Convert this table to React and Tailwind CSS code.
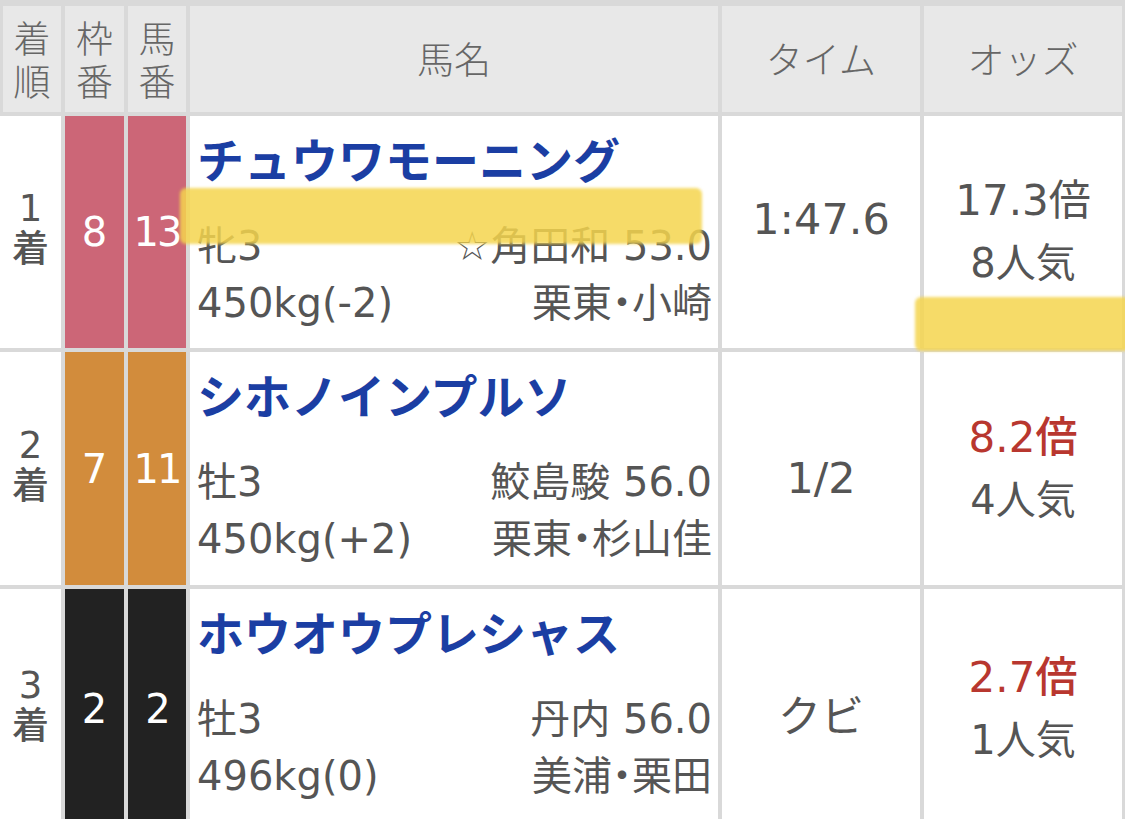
import React from 'react';

const FONT = { fontFamily: '"DejaVu Sans", "Noto Sans CJK JP", sans-serif' };

const rows = [
  {
    pos: '1',
    waku: '8',
    uma: '13',
    frame: 'bg-[#cc6677]',
    name: 'チュウワモーニング',
    sexAge: '牝3',
    jockey: '☆角田和 53.0',
    weight: '450kg(-2)',
    stable: '栗東',
    trainer: '小崎',
    time: '1:47.6',
    timePad: 'pb-[26px]',
    odds: '17.3倍',
    hot: false,
    pop: '8人気',
  },
  {
    pos: '2',
    waku: '7',
    uma: '11',
    frame: 'bg-[#d28c3c]',
    name: 'シホノインプルソ',
    sexAge: '牡3',
    jockey: '鮫島駿 56.0',
    weight: '450kg(+2)',
    stable: '栗東',
    trainer: '杉山佳',
    time: '1/2',
    timePad: 'pt-[20px]',
    odds: '8.2倍',
    hot: true,
    pop: '4人気',
  },
  {
    pos: '3',
    waku: '2',
    uma: '2',
    frame: 'bg-[#222222]',
    name: 'ホウオウプレシャス',
    sexAge: '牡3',
    jockey: '丹内 56.0',
    weight: '496kg(0)',
    stable: '美浦',
    trainer: '栗田',
    time: 'クビ',
    timePad: 'pt-[16px]',
    odds: '2.7倍',
    hot: true,
    pop: '1人気',
  },
];

const Head = ({ children, className = '' }) => (
  <div
    className={`bg-[#e8e8e8] flex items-center justify-center text-center text-[#666] font-light ${className}`}
    style={{ fontFamily: '"Noto Sans CJK JP", sans-serif' }}
  >
    {children}
  </div>
);

function ResultRow({ r }) {
  return (
    <>
      <div className="bg-white flex items-center justify-center pb-[6px]">
        <div className="text-center text-[37px] leading-[41px] font-medium text-[#555]">
          {r.pos}
          <br />着
        </div>
      </div>
      <div className={`${r.frame} flex items-center justify-center text-white text-[40px] font-medium`}>
        {r.waku}
      </div>
      <div className={`${r.frame} flex items-center justify-center text-white text-[40px] font-medium tracking-[-2px]`}>
        {r.uma}
      </div>
      <div className="bg-white flex flex-col pt-[16px] pl-[7px] pr-[6px]">
        <div className="text-[47px] leading-[60px] font-bold text-[#1b3ea3] whitespace-nowrap">
          {r.name}
        </div>
        <div className="mt-[26px] flex justify-between text-[40px] leading-[57px] text-[#555]">
          <span>{r.sexAge}</span>
          <span>{r.jockey}</span>
        </div>
        <div className="flex justify-between text-[40px] leading-[57px] text-[#555]">
          <span>{r.weight}</span>
          <span className="[font-feature-settings:'palt']">
            {r.stable}・{r.trainer}
          </span>
        </div>
      </div>
      <div className={`bg-white flex items-center justify-center text-[43px] text-[#555] ${r.timePad}`}>
        {r.time}
      </div>
      <div className="bg-white flex flex-col items-center justify-center">
        <div className={`text-[42px] leading-[62px] ${r.hot ? 'text-[#b8372f] font-medium' : 'text-[#555]'}`}>
          {r.odds}
        </div>
        <div className="text-[40px] leading-[62px] text-[#555]">{r.pop}</div>
      </div>
    </>
  );
}

export default function App() {
  return (
    <div className="relative w-[1125px] h-[819px] overflow-hidden bg-white" style={FONT}>
      <div className="grid grid-cols-[61px_59px_58px_528px_198px_198px] grid-rows-[106px_232px_233px_240px] gap-[4px] bg-[#d9d9d9] pt-[6px] pr-[3px]">
        <Head className="ml-[3px] text-[37px] leading-[43px]">
          着<br />順
        </Head>
        <Head className="text-[37px] leading-[43px]">
          枠<br />番
        </Head>
        <Head className="text-[37px] leading-[43px]">
          馬<br />番
        </Head>
        <Head className="text-[37px]">馬名</Head>
        <Head className="text-[37px]">タイム</Head>
        <Head className="text-[37px]">オッズ</Head>
        {rows.map((r) => (
          <ResultRow key={r.pos} r={r} />
        ))}
      </div>

      {/* highlighter marks drawn over the table */}
      <div className="absolute left-[180px] top-[188px] w-[522px] h-[56px] rounded-[6px] bg-[#f5d54e]/85 blur-[1.5px]" />
      <div className="absolute left-[915px] top-[297px] w-[215px] h-[54px] rounded-[6px] bg-[#f5d54e]/85 blur-[1.5px]" />
    </div>
  );
}
